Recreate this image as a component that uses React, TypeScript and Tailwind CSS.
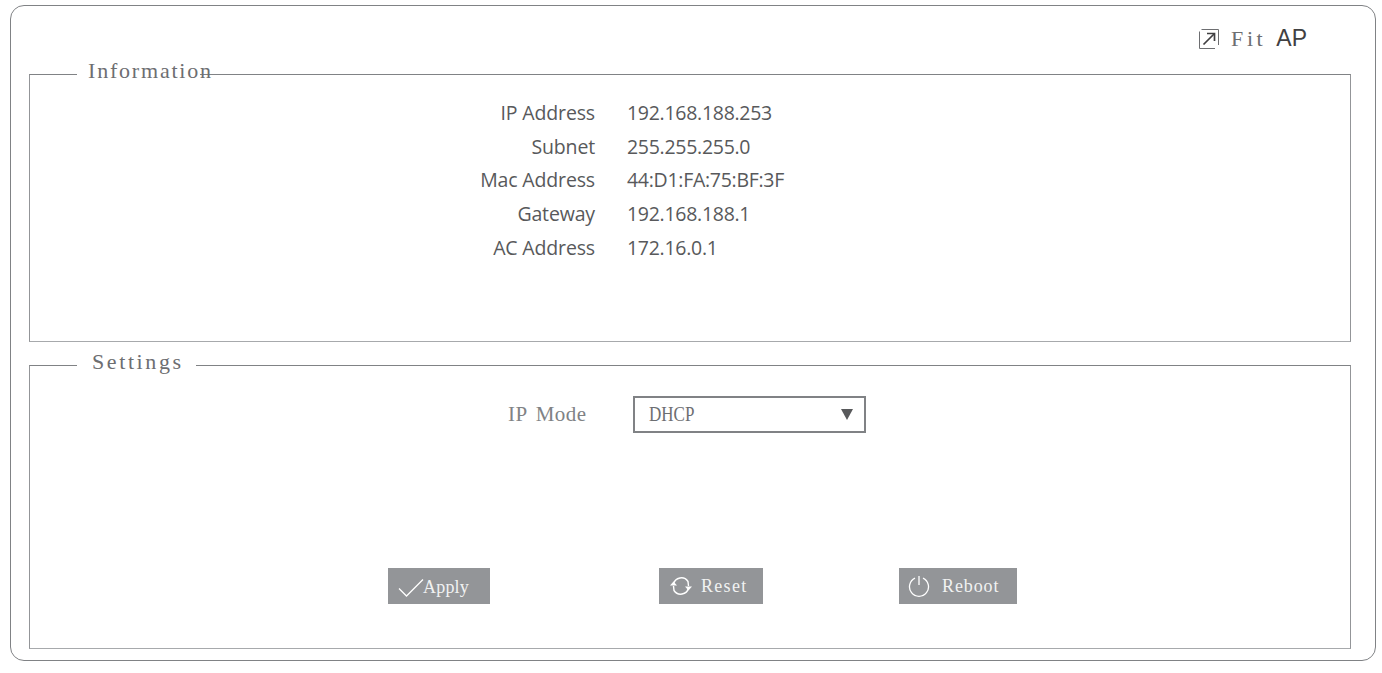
const rows = [
  ['IP Address', '192.168.188.253'],
  ['Subnet', '255.255.255.0'],
  ['Mac Address', '44:D1:FA:75:BF:3F'],
  ['Gateway', '192.168.188.1'],
  ['AC Address', '172.16.0.1'],
];

const serif = "font-['Liberation_Serif',serif]";

function CheckIcon() {
  return (
    <svg width="26" height="20" viewBox="0 0 26 20" fill="none" stroke="#fff" strokeWidth="1.3" className="shrink-0">
      <path d="M1 10.5 L8.5 18 L25 1.5" />
    </svg>
  );
}

function ResetIcon() {
  return (
    <svg width="24" height="22" viewBox="0 0 24 22" fill="none" stroke="#fff" strokeWidth="1.4" className="shrink-0">
      <path d="M4.5 9 A8 8 0 0 1 19 6.5 L19.5 11" />
      <path d="M19.5 13 A8 8 0 0 1 5 15.5 L4.5 11" />
      <path d="M1 10.5 L4.5 6.5 L8 10.5 Z" fill="#fff" stroke="none" />
      <path d="M16 11.5 L19.5 15.5 L23 11.5 Z" fill="#fff" stroke="none" />
    </svg>
  );
}

function PowerIcon() {
  return (
    <svg width="22" height="22" viewBox="0 0 22 22" fill="none" stroke="#fff" strokeWidth="1.3" className="shrink-0">
      <path d="M7 3.2 A9.5 9.5 0 1 0 15 3.2" />
      <path d="M11 1 V10" />
    </svg>
  );
}

function FitIcon() {
  return (
    <svg width="22" height="22" viewBox="0 0 22 22" fill="none" stroke="#6d6e71" strokeWidth="1">
      <path d="M3.5 1.5 H20.5 V17" />
      <path d="M1.5 3.5 V20.5 H17" />
      <path d="M5.5 16.5 L16 6" strokeWidth="1.7" stroke="#414042" />
      <path d="M9 5.5 H16.5 V13" strokeWidth="1.7" stroke="#414042" />
    </svg>
  );
}

export default function App() {
  return (
    <div className="h-[673px] w-[1382px] bg-white pl-[10px] pt-[5px]">
      <div className="flex h-[656px] w-[1366px] flex-col rounded-[14px] border border-[#808285] pl-[18px] pr-[24px]">
        {/* Top right mode */}
        <div className="flex h-[54px] items-center justify-end pr-[44px] pt-[11px]">
          <FitIcon />
          <span className={`${serif} ml-[11px] text-[22px] tracking-[3.6px] text-[#6d6e71]`}>Fit</span>
          <span className="ml-[10px] font-['Liberation_Sans',sans-serif] text-[23px] text-[#414042]">AP</span>
        </div>

        {/* Information */}
        <fieldset className="h-[282px] border border-x-[#939598] border-b-[#a7a9ac] border-t-[#808285]">
          <legend className={`${serif} ml-[47px] h-[28px] w-[123px] whitespace-nowrap pl-[11px] text-[22px] leading-[22px] tracking-[1.8px] text-[#6d6e71]`}>
            Information
          </legend>
          <div className="flex flex-col pt-[8px]">
            {rows.map(([label, value]) => (
              <div key={label} className="grid h-[33.6px] grid-cols-[565px_1fr] items-center gap-x-[32px] font-['Open_Sans',sans-serif] text-[19.5px] text-[#58595b]">
                <span className="text-right tracking-[-0.15px]">{label}</span>
                <span className="tracking-[-0.28px]">{value}</span>
              </div>
            ))}
          </div>
        </fieldset>

        {/* Settings */}
        <fieldset className="mt-[9px] h-[298px] border border-x-[#939598] border-b-[#a7a9ac] border-t-[#808285]">
          <legend className={`${serif} ml-[47px] h-[28px] w-[119px] whitespace-nowrap pl-[15px] text-[22px] leading-[22px] tracking-[2.6px] text-[#6d6e71]`}>
            Settings
          </legend>
          <div className="flex items-center pl-[478px] pt-[17px]">
            <span className={`${serif} w-[125px] text-[21px] tracking-[0.5px] [word-spacing:3px] text-[#808285]`}>IP Mode</span>
            <div className={`${serif} flex h-[37px] w-[233px] items-center justify-between border-2 border-[#808285] pl-[14px] pr-[11px] text-[21px] text-[#6d6e71]`}>
              <span className="origin-left scale-x-[0.81]">DHCP</span>
              <svg width="12" height="11" viewBox="0 0 12 11" fill="#58595b"><path d="M0 0 H12 L6 11 Z" /></svg>
            </div>
          </div>

          <div className="mt-[135px] flex pl-[358px] text-white">
            <button className={`${serif} flex h-[36px] w-[102px] items-center bg-[#939598] pl-[10px] pt-[3px] text-[18px] tracking-[0.2px] text-[#f1f2f2]`}>
              <CheckIcon />
              <span className="-ml-[1px] -mt-[1px]">Apply</span>
            </button>
            <button className={`${serif} ml-[169px] flex h-[36px] w-[104px] items-center bg-[#939598] pl-[10px] text-[18px] tracking-[1.3px] text-[#f1f2f2]`}>
              <ResetIcon />
              <span className="ml-[8px]">Reset</span>
            </button>
            <button className={`${serif} ml-[136px] flex h-[36px] w-[118px] items-center bg-[#939598] pl-[9px] text-[18px] tracking-[0.9px] text-[#f1f2f2]`}>
              <PowerIcon />
              <span className="ml-[12px]">Reboot</span>
            </button>
          </div>
        </fieldset>
      </div>
    </div>
  );
}
